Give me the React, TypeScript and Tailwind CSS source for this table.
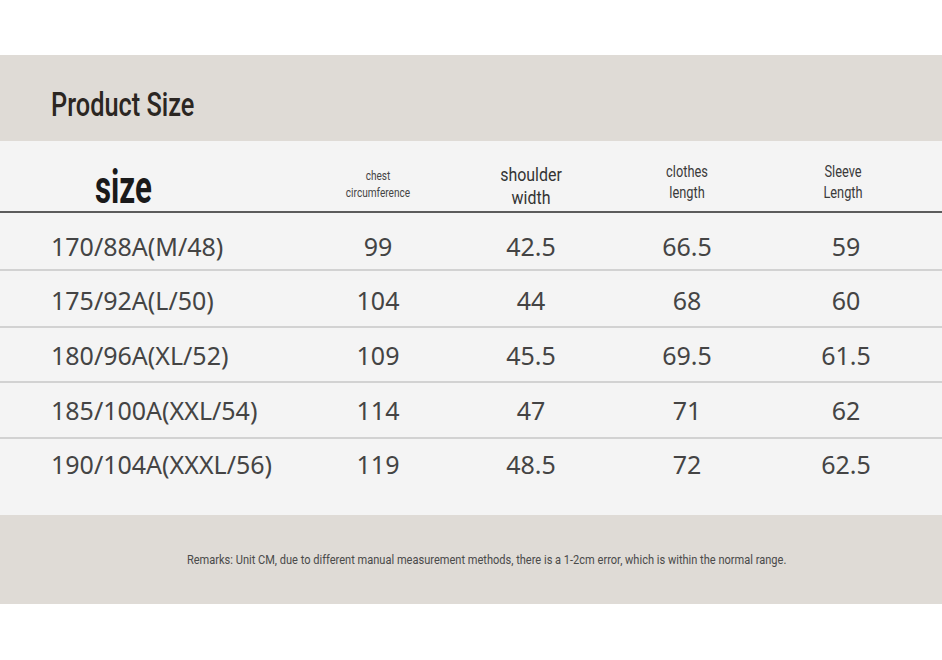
const narrow = { fontFamily: 'Roboto, "Liberation Sans", sans-serif' };

const rows = [
  { size: "170/88A(M/48)", chest: "99", shoulder: "42.5", length: "66.5", sleeve: "59", h: "h-[58px]", pt: "pt-[18px]" },
  { size: "175/92A(L/50)", chest: "104", shoulder: "44", length: "68", sleeve: "60", h: "h-[57px]", pt: "pt-[14px]" },
  { size: "180/96A(XL/52)", chest: "109", shoulder: "45.5", length: "69.5", sleeve: "61.5", h: "h-[55px]", pt: "pt-[12px]" },
  { size: "185/100A(XXL/54)", chest: "114", shoulder: "47", length: "71", sleeve: "62", h: "h-[56px]", pt: "pt-[12px]" },
  { size: "190/104A(XXXL/56)", chest: "119", shoulder: "48.5", length: "72", sleeve: "62.5", h: "h-[75px]", pt: "pt-[10px]" },
];

const cols = "grid grid-cols-[303px_150px_156px_156px_162px_1fr]";

const App = () => {
  return (
    <div className="w-[942px] h-[660px] bg-white overflow-hidden">
      <div className="h-[55px]" />

      {/* Title band */}
      <div className="h-[86px] bg-[#dfdbd6] pl-[51px] pt-[29px]">
        <h1
          className="inline-block origin-left scale-x-[0.745] text-[34px] leading-[40px] font-medium text-[#2b2622] whitespace-nowrap"
          style={narrow}
        >
          Product Size
        </h1>
      </div>

      {/* Table */}
      <div className="h-[374px] bg-[#f4f4f4]">
        <div className={`${cols} h-[72px] border-b-2 border-[#5c5c5c] items-center`} style={narrow}>
          <div className="pl-[95px] pt-[22px]">
            <span className="inline-block origin-left scale-x-[0.68] text-[46px] leading-[46px] font-bold text-[#1a1a1a]">
              size
            </span>
          </div>
          <div className="text-center text-[12px] leading-[17px] text-[#444] pt-[18px]">
            <p className="scale-x-[0.84]">chest</p>
            <p className="scale-x-[0.84]">circumference</p>
          </div>
          <div className="text-center text-[19px] leading-[23px] text-[#333] pt-[20px]">
            <p className="scale-x-[0.84]">shoulder</p>
            <p className="scale-x-[0.84]">width</p>
          </div>
          <div className="text-center text-[16px] leading-[21px] text-[#3a3a3a] pt-[12px]">
            <p className="scale-x-[0.8]">clothes</p>
            <p className="scale-x-[0.8]">length</p>
          </div>
          <div className="text-center text-[16px] leading-[21px] text-[#3a3a3a] pt-[12px] pr-[6px]">
            <p className="scale-x-[0.8]">Sleeve</p>
            <p className="scale-x-[0.8]">Length</p>
          </div>
          <div />
        </div>

        {rows.map((r, i) => (
          <div
            key={i}
            className={`${cols} ${r.h} ${r.pt} ${i < rows.length - 1 ? "border-b-2 border-[#d2d2d2]" : ""} text-[25px] leading-[30px] font-normal text-[#444]`}
            style={{ fontFamily: '"Noto Sans", "Open Sans", sans-serif' }}
          >
            <div className="pl-[51px]">{r.size}</div>
            <div className="text-center">{r.chest}</div>
            <div className="text-center">{r.shoulder}</div>
            <div className="text-center">{r.length}</div>
            <div className="text-center">{r.sleeve}</div>
            <div />
          </div>
        ))}
      </div>

      {/* Remarks band */}
      <div className="h-[89px] bg-[#dfdbd6] flex items-center justify-center">
        <p className="scale-x-[0.85] text-[13px] text-[#4a4a4a] ml-[32px] whitespace-nowrap" style={narrow}>
          Remarks: Unit CM, due to different manual measurement methods, there is a 1-2cm error, which is within the normal range.
        </p>
      </div>
    </div>
  );
};

export default App;
